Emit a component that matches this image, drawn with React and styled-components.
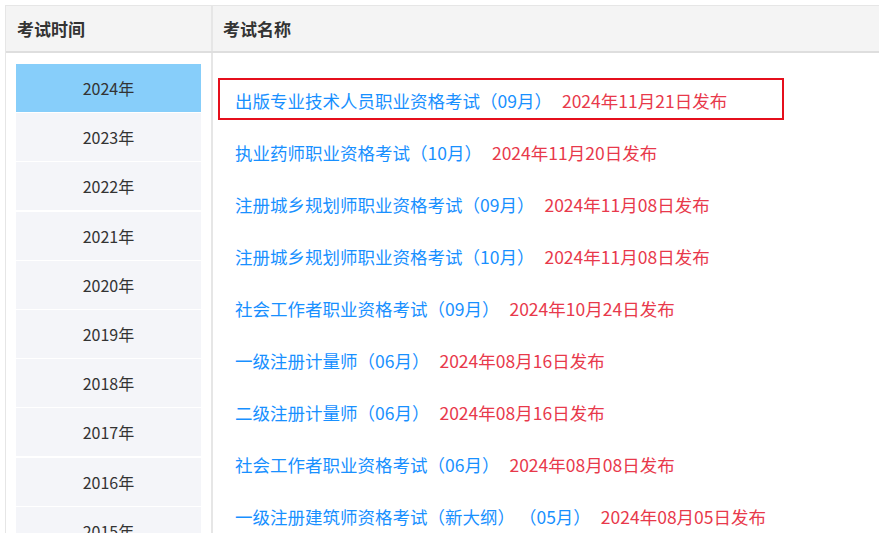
import styled, { createGlobalStyle } from 'styled-components';

const GlobalStyle = createGlobalStyle`
  html, body {
    margin: 0;
    padding: 0;
    background: #fff;
    overflow: hidden;
  }
  body {
    font-family: "Noto Sans CJK SC", "Noto Sans", sans-serif;
    color: #333;
  }
`;

const Panel = styled.div`
  margin: 5px 0 0 5px;
  width: 900px;
  border-top: 1px solid #e6e6e6;
  border-left: 1px solid #e6e6e6;
`;

const HeadRow = styled.div`
  display: grid;
  grid-template-columns: 207px 1fr;
  height: 45px;
  background: #f4f4f4;
  border-bottom: 2px solid #dedede;
`;

const HeadCell = styled.div`
  display: flex;
  align-items: center;
  padding-left: ${(p) => (p.$first ? '11px' : '10px')};
  border-right: ${(p) => (p.$first ? '2px solid #e6e6e6' : 'none')};
  font-size: 17px;
  font-weight: 700;
  color: #333;
`;

const Body = styled.div`
  display: grid;
  grid-template-columns: 207px 1fr;
  height: 600px;
`;

const YearList = styled.ul`
  list-style: none;
  margin: 0;
  padding: 11px 10px 0;
  border-right: 2px solid #e6e6e6;
`;

const YearItem = styled.li`
  height: 48px;
  margin-bottom: 1.2px;
  display: flex;
  align-items: center;
  justify-content: center;
  font-size: 16px;
  color: #333;
  background: ${(p) => (p.$active ? '#87cefa' : '#f4f5f9')};
  cursor: pointer;
`;

const ExamList = styled.ul`
  list-style: none;
  margin: 0;
  padding: 25px 0 0 5px;
`;

const ExamItem = styled.li`
  box-sizing: border-box;
  width: 566px;
  height: 42px;
  margin-bottom: 10px;
  padding: 3px 0 0 15px;
  display: flex;
  align-items: center;
  white-space: pre;
  border: 2px solid ${(p) => (p.$active ? '#e50f1c' : 'transparent')};
  font-size: 17.5px;
`;

const ExamName = styled.a`
  color: #1890ff;
  text-decoration: none;
`;

const PubDate = styled.span`
  margin-left: 10px;
  color: #e8394b;
`;

const years = [2024, 2023, 2022, 2021, 2020, 2019, 2018, 2017, 2016, 2015];

const exams = [
  { name: '出版专业技术人员职业资格考试（09月）', date: '2024年11月21日发布' },
  { name: '执业药师职业资格考试（10月）', date: '2024年11月20日发布' },
  { name: '注册城乡规划师职业资格考试（09月）', date: '2024年11月08日发布' },
  { name: '注册城乡规划师职业资格考试（10月）', date: '2024年11月08日发布' },
  { name: '社会工作者职业资格考试（09月）', date: '2024年10月24日发布' },
  { name: '一级注册计量师（06月）', date: '2024年08月16日发布' },
  { name: '二级注册计量师（06月）', date: '2024年08月16日发布' },
  { name: '社会工作者职业资格考试（06月）', date: '2024年08月08日发布' },
  { name: '一级注册建筑师资格考试（新大纲） （05月）', date: '2024年08月05日发布' },
];

export default function App() {
  return (
    <>
      <GlobalStyle />
      <Panel>
        <HeadRow>
          <HeadCell $first>考试时间</HeadCell>
          <HeadCell>考试名称</HeadCell>
        </HeadRow>
        <Body>
          <YearList>
            {years.map((y, i) => (
              <YearItem key={y} $active={i === 0}>
                {y}年
              </YearItem>
            ))}
          </YearList>
          <ExamList>
            {exams.map((e, i) => (
              <ExamItem key={i} $active={i === 0}>
                <ExamName href="#">{e.name}</ExamName>
                <PubDate>{e.date}</PubDate>
              </ExamItem>
            ))}
          </ExamList>
        </Body>
      </Panel>
    </>
  );
}
